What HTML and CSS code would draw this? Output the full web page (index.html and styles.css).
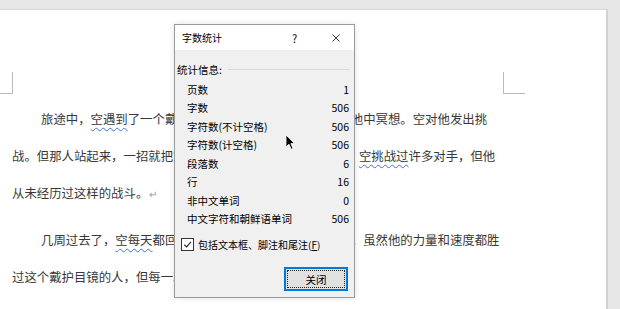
FILE: index.html
```html
<!DOCTYPE html>
<html lang="zh-CN">
<head>
    <meta charset="UTF-8">
    <title>字数统计</title>
    <link rel="stylesheet" href="styles.css">
</head>
<body>
    <div class="workspace">
        <div class="page">
            <div class="marks">
                <span class="mark mark-left"></span>
                <span class="mark mark-right"></span>
            </div>

            <div class="doc">
                <p class="para">旅途中，<span class="wavy">空遇到</span>了一个戴护目镜的男人，他正盘腿坐在水池中冥想。空对他发出挑战。但那人站起来，一招就把空轻轻地打倒在地让他十分震惊，<span class="wavy">空挑战过</span>许多对手，但他从未经历过这样的战斗。<span class="pilcrow">↵</span></p>
                <p class="para">几周过去了，<span class="wavy">空每天</span>都回到池边向他挑战，但每次都输了。虽然他的力量和速度都胜过这个戴护目镜的人，但每一次都被轻松击败。<span class="pilcrow">↵</span></p>
            </div>
        </div>

        <!-- 字数统计 对话框 -->
        <div class="dialog">
            <div class="dialog-title">
                <span class="title-text">字数统计</span>
                <span class="help">?</span>
                <svg class="close" viewBox="0 0 10 10"><path d="M0.5 0.5 L9.5 9.5 M9.5 0.5 L0.5 9.5"/></svg>
            </div>
            <div class="dialog-body">
                <div class="group-label">
                    <span>统计信息:</span>
                    <span class="rule"></span>
                </div>

                <div class="stats">
                    <div class="stat"><span>页数</span><span>1</span></div>
                    <div class="stat"><span>字数</span><span>506</span></div>
                    <div class="stat"><span>字符数(不计空格)</span><span>506</span></div>
                    <div class="stat"><span>字符数(计空格)</span><span>506</span></div>
                    <div class="stat"><span>段落数</span><span>6</span></div>
                    <div class="stat"><span>行</span><span>16</span></div>
                    <div class="stat"><span>非中文单词</span><span>0</span></div>
                    <div class="stat"><span>中文字符和朝鲜语单词</span><span>506</span></div>
                </div>

                <label class="check">
                    <span class="box"><svg viewBox="0 0 12 12"><path d="M2.5 6.2 L5 8.7 L9.8 3.2"/></svg></span>
                    <span>包括文本框、脚注和尾注(<u>F</u>)</span>
                </label>

                <div class="actions">
                    <button class="btn"><span class="focus">关闭</span></button>
                </div>
            </div>
        </div>

        <svg class="cursor" viewBox="0 0 10 17"><path d="M1 1 L1 13 L4 10.2 L6.2 15.2 L8 14.4 L5.9 9.6 L9.6 9.6 Z"/></svg>
    </div>
</body>
</html>
```

FILE: styles.css
```css
:root {
    --font-cjk: "Noto Sans CJK SC", "Noto Sans", sans-serif;
    --color-desk: #e6e6e6;
    --color-text: #383838;
    --color-dialog: #f0f0f0;
    --color-accent: #0078d7;
}

body {
    margin: 0;
    background: var(--color-desk);
    font-family: var(--font-cjk);
    overflow: hidden;
}

.workspace {
    position: relative;
    width: 620px;
    height: 309px;
    overflow: hidden;
}

/* 页面 */
.page {
    margin-top: 9px;
    width: 606px;
    height: 320px;
    background: #ffffff;
    border-top: 1px solid #dadada;
    border-right: 2px solid #d2d2d2;
}

.marks {
    display: flex;
    padding-top: 62px;
    height: 21px;
}

.mark {
    display: block;
    height: 21px;
    border-bottom: 1px solid #b9b9b9;
}

.mark-left { width: 12px; border-right: 1px solid #b9b9b9; }
.mark-right { width: 21px; margin-left: 490px; border-left: 1px solid #b9b9b9; }

.doc {
    width: 490px;
    margin-top: 8px;
    margin-left: 12px;
    font-size: 12.4px;
    color: var(--color-text);
}

.para {
    margin: 0 0 10px;
    line-height: 37px;
    text-indent: 29px;
}

.wavy {
    text-decoration: underline wavy #3f72d9;
    text-decoration-thickness: 1px;
    text-underline-offset: 3px;
}

.pilcrow { color: #9a9a9a; font-size: 10px; margin-left: 1px; }

/* 对话框 */
.dialog {
    position: absolute;
    left: 174px;
    top: 24px;
    width: 179px;
    height: 272px;
    border: 1px solid #9a9a9a;
    background: var(--color-dialog);
    font-size: 10.5px;
    color: #000000;
    box-shadow: 0 0 6px rgba(0, 0, 0, 0.12);
}

.dialog-title {
    display: flex;
    align-items: center;
    height: 25px;
    background: #ffffff;
    padding-left: 7px;
}

.title-text { font-size: 10px; flex: 1; }
.help { font-size: 11px; width: 40px; }
.close { width: 8px; height: 8px; margin-right: 14px; stroke: #222; stroke-width: 1.1; fill: none; }

.dialog-body { padding: 10px 5px 0 2px; }

.group-label {
    display: flex;
    align-items: center;
    height: 18px;
}

.rule { flex: 1; height: 1px; background: #d9d9d9; margin-left: 6px; }

.stats { margin-top: 2px; padding-left: 10px; }

.stat {
    display: flex;
    justify-content: space-between;
    align-items: center;
    height: 18.5px;
}

.check {
    display: flex;
    align-items: center;
    gap: 4px;
    height: 16px;
    margin-top: 8px;
    padding-left: 4px;
    font-size: 10px;
}

.box {
    width: 11px;
    height: 11px;
    border: 1px solid #333;
    background: #fff;
}

.box svg { display: block; width: 11px; height: 11px; stroke: #222; stroke-width: 1.2; fill: none; }

.actions { display: flex; justify-content: flex-end; margin-top: 15px; padding-right: 1px; }

.btn {
    width: 64px;
    height: 24px;
    padding: 2px;
    border: 1px solid var(--color-accent);
    box-shadow: inset 0 0 0 1px var(--color-accent);
    background: #e1e1e1;
    font-family: var(--font-cjk);
    font-size: 10.5px;
    color: #000;
}

.focus {
    display: flex;
    align-items: center;
    justify-content: center;
    height: 100%;
    border: 1px dotted #222;
    box-sizing: border-box;
}

.cursor {
    position: absolute;
    left: 285px;
    top: 134px;
    width: 10px;
    height: 17px;
    fill: #000;
    stroke: #fff;
    stroke-width: 0.8;
}
```
